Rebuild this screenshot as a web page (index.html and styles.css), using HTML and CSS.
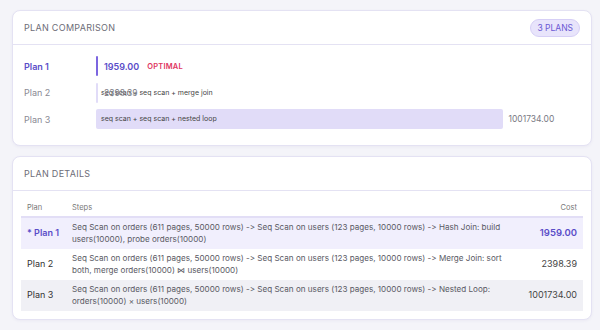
FILE: index.html
```html
<!DOCTYPE html>
<html lang="en">
<head>
    <meta charset="UTF-8">
    <title>Plan Comparison</title>
    <link rel="stylesheet" href="styles.css">
</head>
<body>

<div class="card">
    <div class="card-head">
        <h2>Plan Comparison</h2>
        <span class="badge">3 Plans</span>
    </div>
    <div class="compare">
        <div class="row best">
            <span class="label">Plan 1</span>
            <div class="track">
                <div class="bar" style="width: 0.2%"></div>
                <span class="value">1959.00</span>
                <span class="tag">Optimal</span>
            </div>
        </div>
        <div class="row">
            <span class="label">Plan 2</span>
            <div class="track">
                <div class="bar" style="width: 0.2%"><span>seq scan + seq scan + merge join</span></div>
                <span class="value">2398.39</span>
            </div>
        </div>
        <div class="row">
            <span class="label">Plan 3</span>
            <div class="track">
                <div class="bar" style="width: 84%"><span>seq scan + seq scan + nested loop</span></div>
                <span class="value">1001734.00</span>
            </div>
        </div>
    </div>
</div>

<div class="card">
    <div class="card-head">
        <h2>Plan Details</h2>
    </div>
    <div class="details">
        <table>
            <thead>
                <tr>
                    <th class="col-plan">Plan</th>
                    <th>Steps</th>
                    <th class="col-cost">Cost</th>
                </tr>
            </thead>
            <tbody>
                <tr class="best">
                    <td class="col-plan">* Plan 1</td>
                    <td>Seq Scan on orders (611 pages, 50000 rows) -&gt; Seq Scan on users (123 pages, 10000 rows) -&gt; Hash Join: build users(10000), probe orders(10000)</td>
                    <td class="col-cost">1959.00</td>
                </tr>
                <tr>
                    <td class="col-plan">Plan 2</td>
                    <td>Seq Scan on orders (611 pages, 50000 rows) -&gt; Seq Scan on users (123 pages, 10000 rows) -&gt; Merge Join: sort both, merge orders(10000) &#8904; users(10000)</td>
                    <td class="col-cost">2398.39</td>
                </tr>
                <tr class="shade">
                    <td class="col-plan">Plan 3</td>
                    <td>Seq Scan on orders (611 pages, 50000 rows) -&gt; Seq Scan on users (123 pages, 10000 rows) -&gt; Nested Loop: orders(10000) &times; users(10000)</td>
                    <td class="col-cost">1001734.00</td>
                </tr>
            </tbody>
        </table>
    </div>
</div>

</body>
</html>
```

FILE: styles.css
```css
body {
    margin: 0;
    padding: 10px 8px 0 12px;
    background: #f4f4f9;
    font-family: Inter, "Noto Sans", sans-serif;
    font-feature-settings: "calt" 0, "liga" 0;
    color: #444;
}
.card {
    width: 578px;
    background: #fff;
    border: 1px solid #e4e2f3;
    border-radius: 8px;
    box-shadow: 0 1px 3px rgba(80, 70, 150, 0.06);
    margin-bottom: 10px;
}
.card-head {
    height: 33px;
    display: flex;
    align-items: center;
    justify-content: space-between;
    padding: 0 11px;
    border-bottom: 1px solid #e4e2f3;
}
.card-head h2 {
    margin: 0;
    font-size: 9px;
    font-weight: 400;
    letter-spacing: 0.3px;
    text-transform: uppercase;
    color: #6d6d78;
}
.badge {
    font-size: 8.5px;
    text-transform: uppercase;
    color: #6a58d4;
    background: #e8e4fb;
    border: 1px solid #d6cff6;
    border-radius: 9px;
    padding: 3px 6px;
}

.compare {
    padding: 11px 11px 16px 11px;
    display: flex;
    flex-direction: column;
    gap: 6.5px;
}
.row {
    display: flex;
    align-items: center;
    height: 20px;
}
.label {
    width: 72px;
    font-size: 9px;
    color: #8a8a94;
}
.track {
    flex: 1;
    display: flex;
    align-items: center;
    height: 20px;
}
.bar {
    height: 20px;
    min-width: 2px;
    background: #e1dcf8;
    border-radius: 2px;
    white-space: nowrap;
    font-size: 7px;
    line-height: 20px;
    color: #444;
}
.bar span {
    margin-left: 5px;
}
.value {
    margin-left: 6px;
    font-size: 8.5px;
    color: #7a7a84;
}
.row.best .label {
    color: #5a4dc8;
    font-weight: 600;
}
.row.best .bar {
    background: #7c66e0;
    border-radius: 1px;
}
.row.best .value {
    font-size: 9px;
    font-weight: 600;
    color: #5a4dc8;
}
.tag {
    margin-left: 8px;
    font-size: 7.5px;
    font-weight: 600;
    color: #e0365f;
    letter-spacing: 0.2px;
    text-transform: uppercase;
}

.details {
    padding: 8px;
}
table {
    width: 100%;
    border-collapse: collapse;
}
th {
    font-size: 7.5px;
    font-weight: 400;
    color: #777;
    text-align: left;
    padding: 4px 6px;
    border-bottom: 2px solid #e2def6;
}
td {
    font-size: 8.1px;
    line-height: 12px;
    color: #5a5a64;
    padding: 3px 6px 4px 6px;
    vertical-align: middle;
}
.col-plan {
    width: 33px;
    font-size: 9px;
    color: #333;
    white-space: nowrap;
}
th.col-plan {
    font-size: 7.5px;
    color: #777;
}
.col-cost {
    width: 56px;
    text-align: right;
    font-size: 9px;
    color: #444;
}
th.col-cost {
    font-size: 7.5px;
    color: #777;
}
tr.best {
    background: #f1effd;
}
tr.best .col-plan,
tr.best .col-cost {
    color: #5a4dc8;
    font-weight: 600;
}
tr.best .col-cost {
    font-size: 9.5px;
}
tr.shade {
    background: #f0f0f5;
}
```
